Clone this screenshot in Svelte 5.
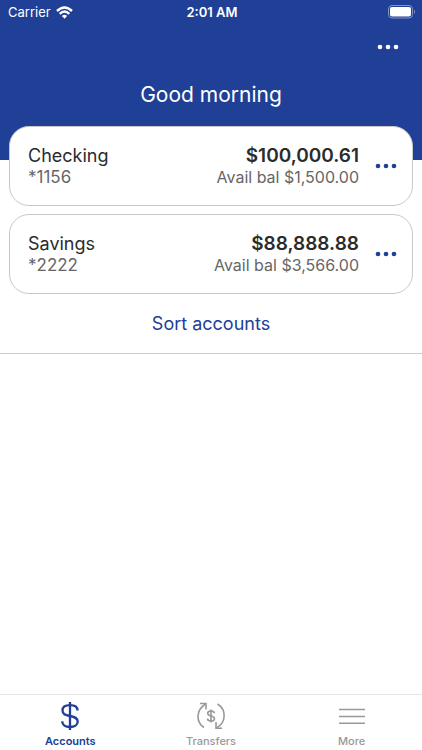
<script>
	let greeting = "Good morning"

	let accounts = [
		{ id: 1, name: "Checking", number: "*1156", balance: "$100,000.61", available: "$1,500.00" },
		{ id: 2, name: "Savings", number: "*2222", balance: "$88,888.88", available: "$3,566.00" }
	]

	let tabs = ["Accounts", "Transfers", "More"]
	let active = "Accounts"
</script>

{#snippet dots()}
	<svg width="22" height="6" viewBox="0 0 22 6" fill="currentColor" aria-hidden="true">
		<circle cx="3" cy="3" r="2.3" />
		<circle cx="11" cy="3" r="2.3" />
		<circle cx="19" cy="3" r="2.3" />
	</svg>
{/snippet}

<div class="screen">
	<header>
		<div class="status">
			<div class="carrier">
				<span>Carrier</span>
				<svg width="17" height="13" viewBox="0 0 17 13" fill="none" stroke="#fff" stroke-width="2.4">
					<path d="M1 5Q8.500 -2 16 5" />
					<path d="M3.700 7.800Q8.500 3.400 13.300 7.800" />
					<path d="M5.900 10Q8.500 7.700 11.100 10L8.500 12.700Z" fill="#fff" stroke="none" />
				</svg>
			</div>
			<span class="time">2:01 AM</span>
			<svg class="battery" width="28" height="14" viewBox="0 0 28 14">
				<rect x="0.500" y="0.500" width="24" height="12.500" rx="3.500" fill="none" stroke="#8394c7" />
				<rect x="2" y="2" width="21" height="9.500" rx="2" fill="#fff" />
				<path d="M26 4.500Q28 6.700 26 9Z" fill="#8394c7" />
			</svg>
		</div>
		<div class="toolbar">
			<button class="dots" aria-label="Options">{@render dots()}</button>
		</div>
		<h1>{greeting}</h1>
	</header>

	<main>
		<ul>
			{#each accounts as account (account.id)}
				<li>
					<div class="name">
						<h2>{account.name}</h2>
						<p>{account.number}</p>
					</div>
					<div class="amount">
						<strong>{account.balance}</strong>
						<p>Avail bal {account.available}</p>
					</div>
					<button class="dots" aria-label="{account.name} options">{@render dots()}</button>
				</li>
			{/each}
		</ul>
		<button class="sort">Sort accounts</button>
	</main>

	<nav>
		{#each tabs as tab}
			<button class:active={tab === active} on:click={() => (active = tab)}>
				{#if tab === "Accounts"}
					<svg width="30" height="30" viewBox="0 0 30 30" fill="none" stroke="currentColor" stroke-width="2.3">
						<path d="M15 1V29" />
						<path d="M22.500 9.500C22.500 6 19.500 4.200 15 4.200S7.500 6 7.500 9.500S10 14 15 15S22.700 17 22.700 20.500S19.500 26 15 26S7.200 24 7.200 20.300" />
					</svg>
				{:else if tab === "Transfers"}
					<svg width="30" height="30" viewBox="0 0 30 30" fill="none" stroke="currentColor" stroke-width="1.600">
						<path d="M8 26.500C0 21.500 -0.500 9.500 9.500 3" />
						<path d="M4 2.500H10V8.500" />
						<path d="M21.500 3C30.500 8.500 30.500 21.500 20.500 27" />
						<path d="M26 27.200H20V21" />
						<path d="M15 8.500V21.500" />
						<path d="M18.300 12.300C18.300 10.700 17 10 15 10S11.700 10.700 11.700 12.300S13 14.500 15 15S18.500 16 18.500 17.700S17 20 15 20S11.500 19.300 11.500 17.500" />
					</svg>
				{:else}
					<svg width="30" height="30" viewBox="0 0 30 30" fill="none" stroke="currentColor" stroke-width="1.500">
						<path d="M2 8.500H28M2 15.500H28M2 22.200H28" />
					</svg>
				{/if}
				<span>{tab}</span>
			</button>
		{/each}
	</nav>
</div>

<style>
	:global(body) {
		background: #fff;
	}

	.screen {
		display: flex;
		flex-direction: column;
		min-height: 100vh;
		font-family: Inter, "Liberation Sans", sans-serif;
		color: #2b2b2b;
	}

	h1, h2, p, ul {
		margin: 0;
		padding: 0;
		font-weight: 400;
	}

	button {
		padding: 0;
		border: none;
		background: none;
		font-family: inherit;
		color: #204097;
		cursor: pointer;
	}

	svg {
		display: block;
	}

	header {
		box-sizing: border-box;
		height: 160px;
		background: #204097;
		color: #fff;
	}

	.status {
		display: grid;
		grid-template-columns: 1fr auto 1fr;
		align-items: center;
		height: 24px;
		padding: 0 6px 0 8px;
		font-size: 13px;
		line-height: 16px;
	}

	.carrier {
		display: flex;
		align-items: center;
		gap: 5px;
	}

	.time {
		font-weight: 600;
	}

	.battery {
		justify-self: end;
	}

	.toolbar {
		display: flex;
		justify-content: flex-end;
		height: 46px;
		padding: 0 18px 0 0;
	}

	.dots {
		display: flex;
		align-items: center;
		justify-content: center;
		width: 32px;
	}

	.toolbar .dots {
		color: #fff;
	}

	h1 {
		padding-top: 10px;
		font-size: 21px;
		line-height: 30px;
		text-align: center;
	}

	main {
		flex: 1;
		margin-top: -34px;
	}

	ul {
		display: flex;
		flex-direction: column;
		gap: 8px;
		padding: 0 9px;
		list-style: none;
	}

	li {
		display: flex;
		align-items: center;
		box-sizing: border-box;
		height: 80px;
		padding: 0 10px 0 18px;
		border: 1px solid #c8c8c8;
		border-radius: 20px;
		background: #fff;
	}

	.name {
		flex: 1;
	}

	.amount {
		margin-right: 11px;
		text-align: right;
	}

	h2, strong {
		display: block;
		font-size: 18px;
		line-height: 23px;
	}

	strong {
		font-size: 19px;
		font-weight: 600;
	}

	p {
		font-size: 16px;
		line-height: 21px;
		color: #666;
	}

	.name p {
		font-size: 17px;
	}

	.sort {
		display: block;
		width: 100%;
		height: 60px;
		border-bottom: 1px solid #ccc;
		font-size: 18px;
		line-height: 24px;
	}

	nav {
		display: flex;
		height: 55px;
		border-top: 1px solid #e4e4e4;
	}

	nav button {
		display: flex;
		flex: 1;
		flex-direction: column;
		align-items: center;
		gap: 3px;
		padding-top: 6px;
		font-size: 11px;
		font-weight: 500;
		line-height: 14px;
		color: #999;
	}

	nav .active {
		font-weight: 600;
		color: #204097;
	}
</style>
